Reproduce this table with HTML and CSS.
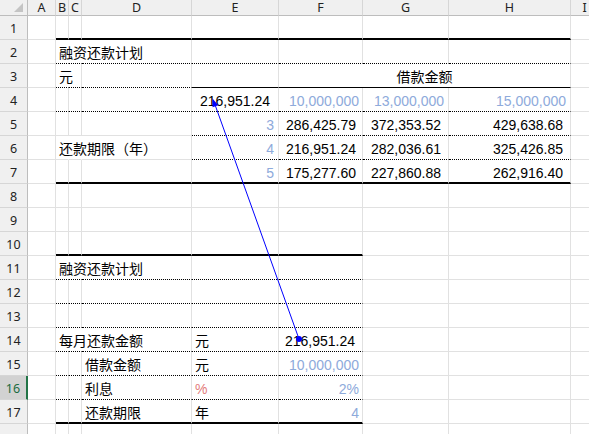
FILE: index.html
```html
<!DOCTYPE html>
<html lang="zh">
<head>
<meta charset="utf-8">
<title>融资还款计划</title>
<link rel="stylesheet" href="styles.css">
</head>
<body>
<div class="sheet">
  <!-- header row -->
  <div class="hd corner"><span class="tri"></span></div>
  <div class="hd">A</div><div class="hd">B</div><div class="hd">C</div><div class="hd">D</div>
  <div class="hd">E</div><div class="hd">F</div><div class="hd">G</div><div class="hd">H</div>
  <div class="hd">I</div><div class="hd"></div>

  <!-- row 1 -->
  <div class="rh">1</div><div class="c"></div>
  <div class="c tk"></div><div class="c tk"></div><div class="c tk"></div><div class="c tk"></div>
  <div class="c tk"></div><div class="c tk"></div><div class="c tk"></div>
  <div class="c"></div><div class="c"></div>

  <!-- row 2 -->
  <div class="rh">2</div><div class="c"></div>
  <div class="c dt nr">融资还款计划</div><div class="c dt nr"></div><div class="c dt"></div><div class="c dt"></div>
  <div class="c dt"></div><div class="c dt"></div><div class="c dt"></div>
  <div class="c"></div><div class="c"></div>

  <!-- row 3 -->
  <div class="rh">3</div><div class="c"></div>
  <div class="c dt nr">元</div><div class="c dt"></div><div class="c dt"></div><div class="c sl"></div>
  <div class="c sl merge3">借款金额</div>
  <div class="c"></div><div class="c"></div>

  <!-- row 4 -->
  <div class="rh">4</div><div class="c"></div>
  <div class="c dt"></div><div class="c dt"></div><div class="c dt"></div>
  <div class="c dt r p8">216,951.24</div>
  <div class="c dt r lb p3">10,000,000</div>
  <div class="c dt r lb p4">13,000,000</div>
  <div class="c dt r lb p4">15,000,000</div>
  <div class="c"></div><div class="c"></div>

  <!-- row 5 -->
  <div class="rh">5</div><div class="c"></div>
  <div class="c"></div><div class="c"></div><div class="c"></div>
  <div class="c dt r lb p4">3</div>
  <div class="c dt r p6">286,425.79</div>
  <div class="c dt r p7">372,353.52</div>
  <div class="c dt r p7">429,638.68</div>
  <div class="c"></div><div class="c"></div>

  <!-- row 6 -->
  <div class="rh">6</div><div class="c"></div>
  <div class="c nr">还款期限（年）</div><div class="c nr"></div><div class="c"></div>
  <div class="c dt r lb p4">4</div>
  <div class="c dt r p6">216,951.24</div>
  <div class="c dt r p7">282,036.61</div>
  <div class="c dt r p7">325,426.85</div>
  <div class="c"></div><div class="c"></div>

  <!-- row 7 -->
  <div class="rh">7</div><div class="c"></div>
  <div class="c tk"></div><div class="c tk"></div><div class="c tk"></div>
  <div class="c tk r lb p4">5</div>
  <div class="c tk r p6">175,277.60</div>
  <div class="c tk r p7">227,860.88</div>
  <div class="c tk r p7">262,916.40</div>
  <div class="c"></div><div class="c"></div>

  <!-- row 8 -->
  <div class="rh">8</div><div class="c"></div>
  <div class="c"></div><div class="c"></div><div class="c"></div><div class="c"></div>
  <div class="c"></div><div class="c"></div><div class="c"></div>
  <div class="c"></div><div class="c"></div>

  <!-- row 9 -->
  <div class="rh">9</div><div class="c"></div>
  <div class="c"></div><div class="c"></div><div class="c"></div><div class="c"></div>
  <div class="c"></div><div class="c"></div><div class="c"></div>
  <div class="c"></div><div class="c"></div>

  <!-- row 10 -->
  <div class="rh">10</div><div class="c"></div>
  <div class="c tk"></div><div class="c tk"></div><div class="c tk"></div><div class="c tk"></div>
  <div class="c tk"></div><div class="c"></div><div class="c"></div>
  <div class="c"></div><div class="c"></div>

  <!-- row 11 -->
  <div class="rh">11</div><div class="c"></div>
  <div class="c dt nr">融资还款计划</div><div class="c dt nr"></div><div class="c dt"></div><div class="c dt"></div>
  <div class="c dt"></div><div class="c"></div><div class="c"></div>
  <div class="c"></div><div class="c"></div>

  <!-- row 12 -->
  <div class="rh">12</div><div class="c"></div>
  <div class="c dt"></div><div class="c dt"></div><div class="c dt"></div><div class="c dt"></div>
  <div class="c dt"></div><div class="c"></div><div class="c"></div>
  <div class="c"></div><div class="c"></div>

  <!-- row 13 -->
  <div class="rh">13</div><div class="c"></div>
  <div class="c dt"></div><div class="c dt"></div><div class="c dt"></div><div class="c dt"></div>
  <div class="c dt"></div><div class="c"></div><div class="c"></div>
  <div class="c"></div><div class="c"></div>

  <!-- row 14 -->
  <div class="rh">14</div><div class="c"></div>
  <div class="c dt nr">每月还款金额</div><div class="c dt nr"></div><div class="c dt"></div>
  <div class="c dt">元</div>
  <div class="c dt r p7">216,951.24</div>
  <div class="c"></div><div class="c"></div>
  <div class="c"></div><div class="c"></div>

  <!-- row 15 -->
  <div class="rh">15</div><div class="c"></div>
  <div class="c dt"></div><div class="c dt"></div><div class="c dt">借款金额</div>
  <div class="c dt">元</div>
  <div class="c dt r lb p3">10,000,000</div>
  <div class="c"></div><div class="c"></div>
  <div class="c"></div><div class="c"></div>

  <!-- row 16 -->
  <div class="rh sel">16</div><div class="c"></div>
  <div class="c dt"></div><div class="c dt"></div><div class="c dt">利息</div>
  <div class="c dt pct">%</div>
  <div class="c dt r lb p3">2%</div>
  <div class="c"></div><div class="c"></div>
  <div class="c"></div><div class="c"></div>

  <!-- row 17 -->
  <div class="rh">17</div><div class="c"></div>
  <div class="c tk"></div><div class="c tk"></div><div class="c tk">还款期限</div>
  <div class="c tk">年</div>
  <div class="c tk r lb p3">4</div>
  <div class="c"></div><div class="c"></div>
  <div class="c"></div><div class="c"></div>

  <!-- row 18 (only its top edge is in view) -->
  <div class="rh"></div><div class="c"></div>
  <div class="c"></div><div class="c"></div><div class="c"></div><div class="c"></div>
  <div class="c"></div><div class="c"></div><div class="c"></div>
  <div class="c"></div><div class="c"></div>

  <svg class="arrows" width="589" height="434" viewBox="0 0 589 434">
    <line x1="299" y1="339" x2="215.3" y2="105.5" stroke="#0000ff" stroke-width="1"/>
    <circle cx="299" cy="339" r="3" fill="#0000ff"/>
    <polygon points="212.5,98.5 218.3,105.2 212.6,107.2" fill="#0000ff"/>
  </svg>
</div>
</body>
</html>
```
FILE: styles.css
```css
html, body {
  margin: 0;
  padding: 0;
  background: #ffffff;
  overflow: hidden;
}

.sheet {
  position: relative;
  display: grid;
  grid-template-columns: 28px 28px 13px 13px 110px 87px 84px 86px 122px 28px 40px;
  grid-template-rows: 16px repeat(18, 24px);
  width: 589px;
  height: 434px;
  overflow: hidden;
  font-family: "Liberation Sans", "Noto Sans CJK SC", sans-serif;
  font-size: 14px;
  color: #000;
}

.hd {
  background: #f0f0f0;
  border-right: 1px solid #d6d6d6;
  border-bottom: 1px solid #bdbdbd;
  font-family: "Noto Sans", "Liberation Sans", sans-serif;
  font-size: 12.5px;
  line-height: 15px;
  text-align: center;
  color: #222;
}

.corner {
  display: flex;
  justify-content: flex-end;
  align-items: flex-end;
  padding: 0 4px 3px 0;
  border-right-color: #bdbdbd;
}

.tri {
  width: 0;
  height: 0;
  border-left: 9px solid transparent;
  border-bottom: 9px solid #c4c4c4;
}

.rh {
  background: #f0f0f0;
  border-right: 1px solid #bdbdbd;
  border-bottom: 1px solid #d6d6d6;
  font-family: "Noto Sans", "Liberation Sans", sans-serif;
  font-size: 12.5px;
  line-height: 20px;
  padding-top: 3px;
  text-align: center;
  color: #222;
}

.rh.sel {
  background: #d2d2d2;
  color: #1b6b3f;
  border-right: 2px solid #217346;
}

.c {
  border-right: 1px solid #e1e1e1;
  border-bottom: 1px solid #e1e1e1;
  padding: 2px 3px 0 3px;
  line-height: 22px;
  white-space: nowrap;
  overflow: visible;
  min-width: 0;
}

.nr { border-right-color: transparent; }

.tk { border-bottom: 2px solid #000; }
.dt { border-bottom: 1px dotted #000; }
.sl { border-bottom: 1px solid #000; }

.merge3 {
  grid-column: span 3;
  text-align: center;
}

.r { text-align: right; }
.lb { color: #8eaadb; }
.pct { color: #e37c7c; }

.p3 { padding-right: 3px; }
.p4 { padding-right: 4px; }
.p6 { padding-right: 6px; }
.p7 { padding-right: 7px; }
.p8 { padding-right: 8px; }

.arrows {
  position: absolute;
  top: 0;
  left: 0;
  pointer-events: none;
}
```
